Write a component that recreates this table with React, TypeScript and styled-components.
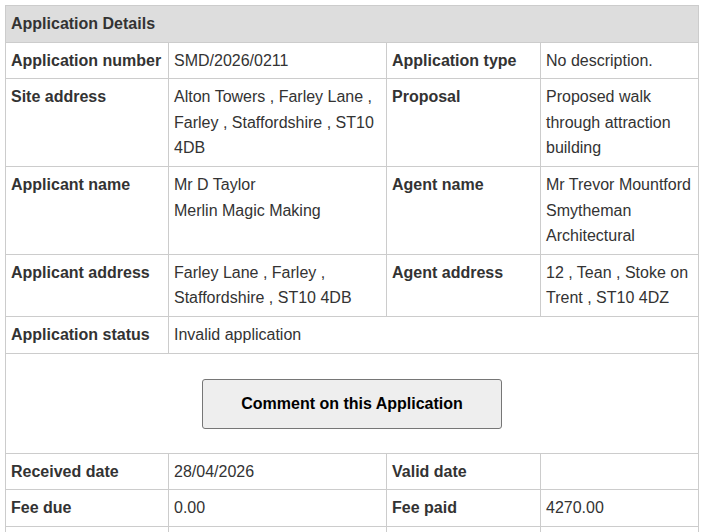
import React from "react";
import styled, { createGlobalStyle } from "styled-components";

const Global = createGlobalStyle`
  html, body { margin: 0; padding: 0; background: #fff; }
  body { font-family: "Liberation Sans", Arial, sans-serif; color: #333; }
`;

const Page = styled.div`
  padding: 5px 4px 0 5px;
`;

const Table = styled.table`
  width: 693px;
  table-layout: fixed;
  border-collapse: collapse;
  font-size: 16px;
  line-height: 1.6;
`;

const HeadCell = styled.th`
  background: #ddd;
  border: 1px solid #ccc;
  padding: 5px;
  text-align: left;
  font-weight: bold;
  color: #333;
`;

const Label = styled.th`
  border: 1px solid #ccc;
  padding: 5px;
  text-align: left;
  vertical-align: top;
  font-weight: bold;
  color: #333;
`;

const Value = styled.td`
  border: 1px solid #ccc;
  padding: 5px;
  vertical-align: top;
  color: #333;
`;

const ActionCell = styled.td`
  border: 1px solid #ccc;
  padding: 25px 5px 24px;
`;

const CommentButton = styled.button`
  display: block;
  margin: 0 auto;
  width: 300px;
  height: 50px;
  background: #eee;
  border: 1px solid #767676;
  border-radius: 3px;
  font-family: "Liberation Sans", Arial, sans-serif;
  font-size: 16px;
  font-weight: bold;
  color: #000;
  cursor: pointer;
`;

type Row = [string, React.ReactNode, string, React.ReactNode];

const Lines = ({ items }: { items: string[] }) => (
  <>
    {items.map((t, i) => (
      <div key={i}>{t}</div>
    ))}
  </>
);

const topRows: Row[] = [
  ["Application number", "SMD/2026/0211", "Application type", "No description."],
  [
    "Site address",
    "Alton Towers , Farley Lane , Farley , Staffordshire , ST10 4DB",
    "Proposal",
    "Proposed walk through attraction building",
  ],
  [
    "Applicant name",
    <Lines items={["Mr D Taylor", "Merlin Magic Making"]} />,
    "Agent name",
    <Lines items={["Mr Trevor Mountford", "Smytheman Architectural"]} />,
  ],
  [
    "Applicant address",
    "Farley Lane , Farley , Staffordshire , ST10 4DB",
    "Agent address",
    "12 , Tean , Stoke on Trent , ST10 4DZ",
  ],
];

const bottomRows: Row[] = [
  ["Received date", "28/04/2026", "Valid date", ""],
  ["Fee due", "0.00", "Fee paid", "4270.00"],
  ["", "", "", ""],
];

export default function App() {
  return (
    <>
      <Global />
      <Page>
        <Table>
          <colgroup>
            <col style={{ width: 163 }} />
            <col style={{ width: 218 }} />
            <col style={{ width: 154 }} />
            <col style={{ width: 158 }} />
          </colgroup>
          <thead>
            <tr>
              <HeadCell colSpan={4}>Application Details</HeadCell>
            </tr>
          </thead>
          <tbody>
            {topRows.map((r, i) => (
              <tr key={i}>
                <Label>{r[0]}</Label>
                <Value>{r[1]}</Value>
                <Label>{r[2]}</Label>
                <Value>{r[3]}</Value>
              </tr>
            ))}
            <tr>
              <Label>Application status</Label>
              <Value colSpan={3}>Invalid application</Value>
            </tr>
            <tr>
              <ActionCell colSpan={4}>
                <CommentButton type="button">Comment on this Application</CommentButton>
              </ActionCell>
            </tr>
            {bottomRows.map((r, i) => (
              <tr key={i}>
                <Label>{r[0] || "\u00a0"}</Label>
                <Value>{r[1]}</Value>
                <Label>{r[2]}</Label>
                <Value>{r[3]}</Value>
              </tr>
            ))}
          </tbody>
        </Table>
      </Page>
    </>
  );
}
